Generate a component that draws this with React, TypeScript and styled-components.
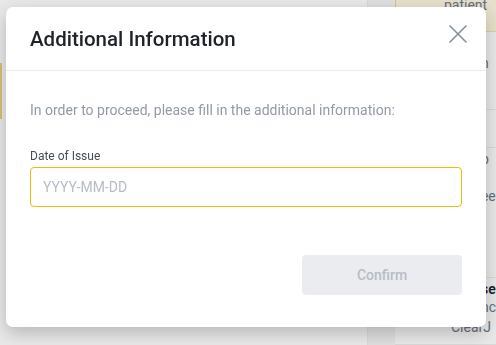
import React from 'react';
import styled, { createGlobalStyle } from 'styled-components';

const GlobalStyle = createGlobalStyle`
  html, body {
    margin: 0;
    padding: 0;
    height: 100%;
    overflow: hidden;
    font-family: Roboto, "Noto Sans", Arial, sans-serif;
    background: #fafafa;
  }
  #root {
    height: 100%;
  }
`;

const Page = styled.div`
  display: flex;
  height: 345px;
  background: #ffffff;
`;

const MainCol = styled.div`
  flex: 1;
  display: flex;
  flex-direction: column;
  padding-top: 63px;
`;

const AccentBlock = styled.div`
  width: 2px;
  height: 56px;
  background: #f0d27a;
`;

const SideCol = styled.div`
  width: 128px;
  display: flex;
  border-left: 1px solid #eeeeee;
`;

const SideGap = styled.div`
  width: 32px;
  background: #f5f5f5;
`;

const SidePanel = styled.div`
  flex: 1;
  display: flex;
  flex-direction: column;
  font-size: 14px;
  color: #707a8a;
`;

const Notice = styled.div`
  height: 32px;
  box-sizing: border-box;
  background: #fdf6df;
  border-left: 1px solid #f0d27a;
  border-bottom: 1px solid #f3e3b0;
  padding-left: 48px;
  line-height: 10px;
  white-space: nowrap;
  overflow: hidden;
`;

const SideSection = styled.div<{ $h?: number }>`
  height: ${({ $h }) => ($h ? `${$h}px` : 'auto')};
  flex: ${({ $h }) => ($h ? 'none' : 1)};
  display: flex;
  flex-direction: column;
  border-bottom: 1px solid #eeeeee;
  box-sizing: border-box;
`;

const SideText = styled.div<{ $top: number; $indent: number; $bold?: boolean }>`
  margin-top: ${({ $top }) => $top}px;
  padding-left: ${({ $indent }) => $indent}px;
  line-height: 18px;
  white-space: nowrap;
  font-weight: ${({ $bold }) => ($bold ? 600 : 400)};
  color: ${({ $bold }) => ($bold ? '#1e2329' : '#707a8a')};
`;

const Mask = styled.div`
  position: fixed;
  inset: 0;
  background: rgba(0, 0, 0, 0.09);
  display: flex;
  align-items: flex-start;
  justify-content: flex-start;
  padding: 7px 0 0 6px;
`;

const Modal = styled.div`
  width: 480px;
  height: 320px;
  background: #ffffff;
  border-radius: 7px;
  box-shadow: 0 6px 18px rgba(0, 0, 0, 0.22);
  display: flex;
  flex-direction: column;
`;

const Header = styled.div`
  height: 63px;
  display: flex;
  align-items: center;
  justify-content: space-between;
  padding: 0 15px 0 24px;
  border-bottom: 1px solid #eaecef;
`;

const Title = styled.h2`
  margin: 0;
  font-size: 20.5px;
  font-weight: 500;
  color: #1e2329;
`;

const CloseButton = styled.button`
  border: none;
  background: none;
  padding: 4px;
  display: flex;
  cursor: pointer;
  margin-top: -10px;
`;

const Body = styled.div`
  flex: 1;
  display: flex;
  flex-direction: column;
  padding: 29px 24px 32px;
`;

const Intro = styled.p`
  margin: 0;
  font-size: 14px;
  line-height: 20px;
  color: #929aa5;
`;

const Label = styled.label`
  margin-top: 28px;
  font-size: 12px;
  line-height: 16px;
  color: #474d57;
`;

const Input = styled.input`
  margin-top: 3px;
  height: 40px;
  box-sizing: border-box;
  border: 1px solid #f0b90b;
  border-radius: 4px;
  padding: 0 12px;
  font-family: inherit;
  font-size: 14px;
  color: #1e2329;
  outline: none;
  &::placeholder {
    color: #b7bdc6;
  }
`;

const Footer = styled.div`
  margin-top: auto;
  display: flex;
  justify-content: flex-end;
`;

const ConfirmButton = styled.button`
  width: 160px;
  height: 40px;
  border: none;
  border-radius: 4px;
  background: #eaecef;
  color: #b7bdc6;
  font-family: inherit;
  font-size: 14px;
  font-weight: 500;
`;

export default function App() {
  return (
    <>
      <GlobalStyle />
      <Page>
        <MainCol>
          <AccentBlock />
        </MainCol>
        <SideCol>
          <SideGap />
          <SidePanel>
            <Notice>patient</Notice>
            <SideSection $h={78}>
              <SideText $top={22} $indent={86}>n</SideText>
            </SideSection>
            <SideSection $h={38} />
            <SideSection $h={130}>
              <SideText $top={2} $indent={86}>b</SideText>
              <SideText $top={19} $indent={86}>ee</SideText>
            </SideSection>
            <SideSection>
              <SideText $top={2} $indent={86} $bold>se</SideText>
              <SideText $top={0} $indent={86}>nc</SideText>
              <SideText $top={2} $indent={56}>ClearJ</SideText>
            </SideSection>
          </SidePanel>
        </SideCol>
      </Page>
      <Mask>
        <Modal>
          <Header>
            <Title>Additional Information</Title>
            <CloseButton aria-label="Close">
              <svg width="18" height="18" viewBox="0 0 18 18">
                <path d="M1 1L17 17M17 1L1 17" stroke="#848e9c" strokeWidth="1.6" strokeLinecap="round" />
              </svg>
            </CloseButton>
          </Header>
          <Body>
            <Intro>In order to proceed, please fill in the additional information:</Intro>
            <Label>Date of Issue</Label>
            <Input placeholder="YYYY-MM-DD" />
            <Footer>
              <ConfirmButton disabled>Confirm</ConfirmButton>
            </Footer>
          </Body>
        </Modal>
      </Mask>
    </>
  );
}
